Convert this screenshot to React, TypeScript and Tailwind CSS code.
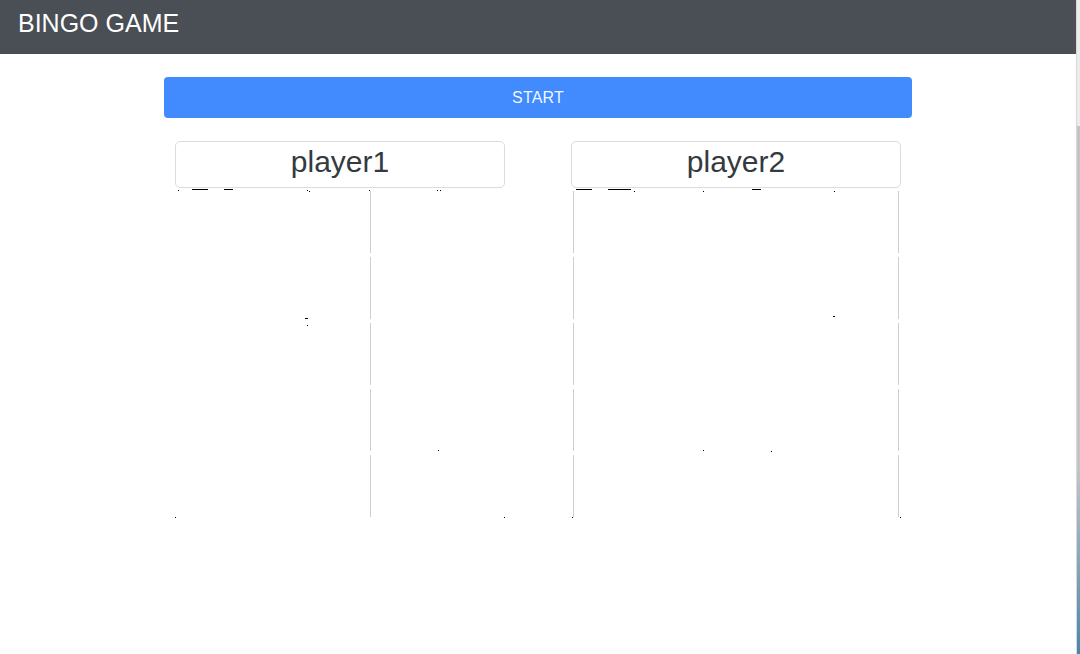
import React from "react";

type Mark = { x: number; y: number; w?: number; h?: number };

const rows = [0, 1, 2, 3, 4];

// tiny stray marks, positions relative to the grid area (top-left = box left, y 186)
const marks1: Mark[] = [
  { x: 3, y: 2 },
  { x: 17, y: 1, w: 16 },
  { x: 49, y: 1, w: 9 },
  { x: 132, y: 2 },
  { x: 134, y: 3 },
  { x: 194, y: 2 },
  { x: 262, y: 2 },
  { x: 265, y: 2 },
  { x: 130, y: 130, w: 3 },
  { x: 132, y: 137 },
  { x: 263, y: 262 },
  { x: 0, y: 329 },
  { x: 329, y: 329 },
];

const marks2: Mark[] = [
  { x: 5, y: 1, w: 16 },
  { x: 37, y: 1, w: 23 },
  { x: 63, y: 3 },
  { x: 132, y: 3 },
  { x: 181, y: 1, w: 9 },
  { x: 263, y: 3 },
  { x: 262, y: 128, w: 2 },
  { x: 132, y: 262 },
  { x: 200, y: 263 },
  { x: 1, y: 329 },
  { x: 329, y: 329 },
];

function Player({ name, variant }: { name: string; variant: 1 | 2 }) {
  const marks = variant === 1 ? marks1 : marks2;
  return (
    <div className="w-[330px] flex flex-col">
      <div className="h-[47px] border border-[#dcdcdc] rounded-[5px] flex items-center justify-center text-[30px] text-[#343a40] leading-none pb-[5px]">
        {name}
      </div>
      <div className="relative flex flex-col gap-[4px] pt-[3px]">
        {rows.map((r) =>
          variant === 1 ? (
            <div key={r} className="h-[62px] ml-[195px] w-px bg-[#cfcfcf]" />
          ) : (
            <div
              key={r}
              className="h-[62px] ml-[2px] w-[326px] border-x border-[#cfcfcf]"
            />
          )
        )}
        {marks.map((m, i) => (
          <span
            key={i}
            className="absolute bg-black"
            style={{ left: m.x, top: m.y, width: m.w ?? 1, height: m.h ?? 1 }}
          />
        ))}
      </div>
    </div>
  );
}

export default function App() {
  return (
    <div
      className="w-[1080px] h-[654px] flex bg-white overflow-hidden"
      style={{ fontFamily: '"Liberation Sans", Arial, sans-serif' }}
    >
      <div className="flex-1 flex flex-col">
        <header className="h-[54px] bg-[#4a4e55] flex items-center pl-[18px] pb-[7px]">
          <h1 className="text-white text-[25px] leading-none">BINGO GAME</h1>
        </header>
        <main className="w-[748px] mx-auto pt-[23px]">
          <button className="w-full h-[41px] rounded-[4px] bg-[#418bff] text-white/95 text-[16px] font-light tracking-[0.2px]">
            START
          </button>
          <div className="flex pl-[11px] gap-[66px] mt-[23px]">
            <Player name="player1" variant={1} />
            <Player name="player2" variant={2} />
          </div>
        </main>
      </div>
      <aside className="w-[4px] flex flex-col border-l border-[#d8d8d8]">
        <div className="h-[126px] bg-[#ececec]" />
        <div className="flex-1 bg-gradient-to-b from-[#c4c3c8] via-[#c4c3c8] via-65% to-[#4588a9]" />
      </aside>
    </div>
  );
}
